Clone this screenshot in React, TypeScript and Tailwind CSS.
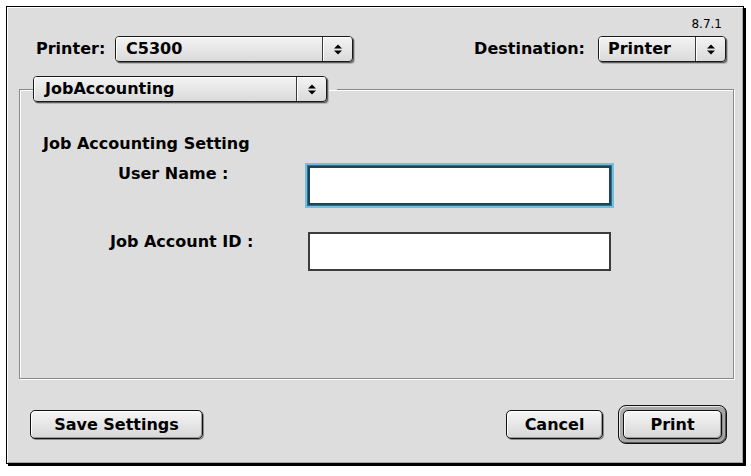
const font = "font-['DejaVu_Sans',sans-serif]";

function Arrows() {
  return (
    <svg width="10" height="13" viewBox="0 0 10 13">
      <path d="M1 5.5 L5 1.5 L9 5.5 Z" fill="#000" />
      <path d="M1 7.5 L9 7.5 L5 11.5 Z" fill="#000" />
    </svg>
  );
}

function Popup({ label, className }: { label: string; className: string }) {
  return (
    <div
      className={`flex h-[26px] shrink-0 items-stretch rounded-[4px] border border-[#1a1a1a] bg-[linear-gradient(#f3f3f3,#dadada)] shadow-[1px_1px_0_#5e5e5e,2px_2px_0_#b4b4b4] ${className}`}
    >
      <div className="flex flex-1 items-center rounded-l-[3px] pl-[10px] shadow-[inset_1px_1px_0_#fff]">
        {label}
      </div>
      <div className="flex w-[30px] items-center justify-center rounded-r-[3px] border-l border-[#3a3a3a] shadow-[inset_1px_1px_0_#fff]">
        <Arrows />
      </div>
    </div>
  );
}

function Button({ label, className }: { label: string; className: string }) {
  return (
    <button
      className={`h-[29px] rounded-[5px] border border-[#111] bg-[linear-gradient(#f6f6f6,#d6d6d6)] shadow-[inset_1px_1px_0_#fff,inset_-1px_-1px_0_#9a9a9a,1px_1px_0_#8a8a8a] ${font} text-[16px] font-bold text-black ${className}`}
    >
      {label}
    </button>
  );
}

export default function App() {
  return (
    <div className={`h-[476px] w-[751px] overflow-hidden bg-white pl-[6px] pt-[6px] ${font} text-[16px] font-bold text-black`}>
      <div className="flex h-[458px] w-[738px] flex-col border border-black bg-[#dddddd] shadow-[2px_2px_0_#000,inset_1px_1px_0_#fff,inset_-1px_-1px_0_#a6a6a6]">
        {/* version */}
        <div className="mt-[10px] flex h-[14px] justify-end pr-[21px] text-[12px] font-normal leading-[14px]">
          8.7.1
        </div>

        {/* printer / destination */}
        <div className="mt-[5px] flex h-[26px] items-center pl-[29px] pr-[17px]">
          <span className="w-[79px]">Printer:</span>
          <Popup label="C5300" className="w-[238px]" />
          <div className="flex-1" />
          <span className="mr-[13px]">Destination:</span>
          <Popup label="Printer" className="w-[128px] [&>div:first-child]:pl-[9px]" />
        </div>

        {/* group box */}
        <fieldset className="ml-[12px] mr-[9px] mt-[14px] border border-[#8a8a8a] pl-[13px] shadow-[1px_1px_0_#fff,inset_1px_1px_0_#fff]">
          <legend className="pr-[10px]">
            <Popup label="JobAccounting" className="w-[294px] [&>div:first-child]:pl-[11px]" />
          </legend>
          <div className="flex h-[276px] flex-col">
            <div className="ml-[10px] mt-[32px] h-[20px] leading-[20px]">Job Accounting Setting</div>

            <div className="mt-[12px] flex items-start">
              <span className="-mt-[2px] w-[275px] pl-[85px] leading-[20px]">User Name :</span>
              <input
                className="h-[39px] w-[303px] border-2 border-[#1c4658] bg-white shadow-[0_0_0_1px_#2f6f8c,0_0_0_3px_#74bfe0] outline-none"
                autoFocus
              />
            </div>

            <div className="mt-[27px] flex items-start">
              <span className="w-[275px] pl-[77px] leading-[20px]">Job Account ID :</span>
              <input className="h-[39px] w-[303px] border-2 border-[#3c3c3c] bg-white outline-none" />
            </div>
          </div>
        </fieldset>

        {/* buttons */}
        <div className="mt-[26px] flex h-[39px] items-center pl-[23px] pr-[16px]">
          <Button label="Save Settings" className="w-[173px]" />
          <div className="flex-1" />
          <Button label="Cancel" className="w-[97px]" />
          <div className="ml-[15px] flex h-[39px] w-[109px] items-center justify-center rounded-[8px] border border-[#111] bg-[#a9a9a9] shadow-[inset_1px_1px_0_#e6e6e6,inset_-1px_-1px_0_#555]">
            <Button label="Print" className="w-[99px]" />
          </div>
        </div>
      </div>
    </div>
  );
}
